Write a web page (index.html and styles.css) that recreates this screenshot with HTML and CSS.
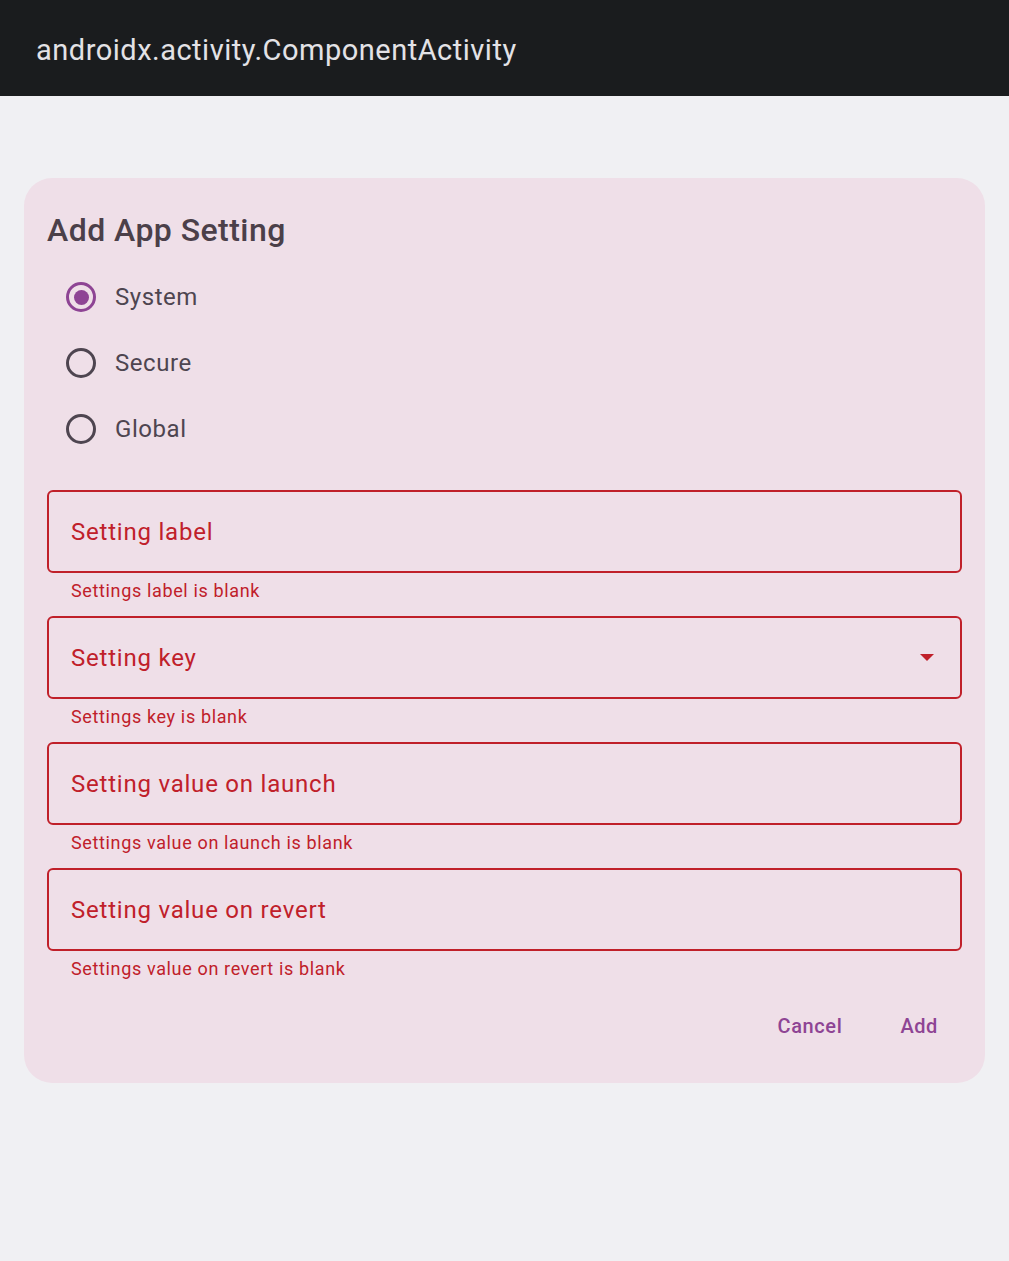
FILE: index.html
```html
<!DOCTYPE html>
<html>
<head>
<meta charset="utf-8">
<link rel="stylesheet" href="styles.css">
</head>
<body>
<header class="appbar"><span class="appbar-title">androidx.activity.ComponentActivity</span></header>
<main class="screen">
  <section class="dialog">
    <h1 class="dialog-title">Add App Setting</h1>
    <div class="radio-group">
      <label class="radio-row"><span class="radio radio-on"><span class="radio-dot"></span></span><span class="radio-label">System</span></label>
      <label class="radio-row"><span class="radio"></span><span class="radio-label">Secure</span></label>
      <label class="radio-row"><span class="radio"></span><span class="radio-label">Global</span></label>
    </div>
    <div class="field-group">
      <div class="field"><span class="field-label">Setting label</span></div>
      <div class="helper">Settings label is blank</div>
    </div>
    <div class="field-group">
      <div class="field"><span class="field-label">Setting key</span><svg class="dropdown" width="14" height="7" viewBox="0 0 14 7"><path d="M0 0 L14 0 L7 7 Z" fill="currentColor"/></svg></div>
      <div class="helper">Settings key is blank</div>
    </div>
    <div class="field-group">
      <div class="field"><span class="field-label">Setting value on launch</span></div>
      <div class="helper">Settings value on launch is blank</div>
    </div>
    <div class="field-group">
      <div class="field"><span class="field-label">Setting value on revert</span></div>
      <div class="helper">Settings value on revert is blank</div>
    </div>
    <div class="actions">
      <button class="text-btn">Cancel</button>
      <button class="text-btn">Add</button>
    </div>
  </section>
</main>
</body>
</html>
```

FILE: styles.css
```css
html, body {
  margin: 0;
  padding: 0;
}
body {
  background: #f0f0f3;
  font-family: Roboto, "Noto Sans", sans-serif;
  width: 1009px;
  height: 1261px;
  overflow: hidden;
}
.appbar {
  height: 96px;
  background: #1a1c1e;
  display: flex;
  align-items: center;
  padding-left: 36px;
  box-sizing: border-box;
}
.appbar-title {
  color: #e3e2e6;
  font-size: 29px;
  line-height: 34px;
  letter-spacing: 0.5px;
  margin-top: 4px;
}
.screen {
  padding: 82px 24px 0 24px;
}
.dialog {
  background: #efdfe8;
  border-radius: 28px;
  padding: 32px 23px 27px 23px;
}
.dialog-title {
  margin: 0;
  font-size: 32px;
  line-height: 40px;
  font-weight: 500;
  color: #4b4049;
  letter-spacing: 0.45px;
}
.radio-group {
  margin-top: 14px;
  display: flex;
  flex-direction: column;
}
.radio-row {
  height: 66px;
  display: flex;
  align-items: center;
  padding-left: 19px;
}
.radio {
  width: 30px;
  height: 30px;
  box-sizing: border-box;
  border: 3px solid #4e4550;
  border-radius: 50%;
  display: flex;
  align-items: center;
  justify-content: center;
}
.radio-on {
  border-color: #8e4494;
}
.radio-dot {
  width: 15px;
  height: 15px;
  border-radius: 50%;
  background: #8e4494;
}
.radio-label {
  margin-left: 19px;
  font-size: 24px;
  color: #4e4550;
  letter-spacing: 0.55px;
}
.radio-group + .field-group {
  margin-top: 28px;
}
.field {
  height: 83px;
  box-sizing: border-box;
  border: 2px solid #c0202a;
  border-radius: 6px;
  display: flex;
  align-items: center;
  padding: 0 26px 0 22px;
  color: #c0202a;
}
.field-label {
  flex: 1;
  font-size: 24px;
  letter-spacing: 0.78px;
}
.dropdown {
  display: block;
}
.helper {
  padding: 6px 0 13px 24px;
  font-size: 18px;
  line-height: 24px;
  color: #c0202a;
  letter-spacing: 0.64px;
}
.actions {
  display: flex;
  justify-content: flex-end;
  gap: 10px;
  margin-top: 2px;
}
.text-btn {
  height: 60px;
  padding: 0 24px;
  border: none;
  background: transparent;
  font-family: Roboto, "Noto Sans", sans-serif;
  font-size: 20px;
  font-weight: 500;
  color: #8e4494;
  letter-spacing: 0.6px;
}
```
